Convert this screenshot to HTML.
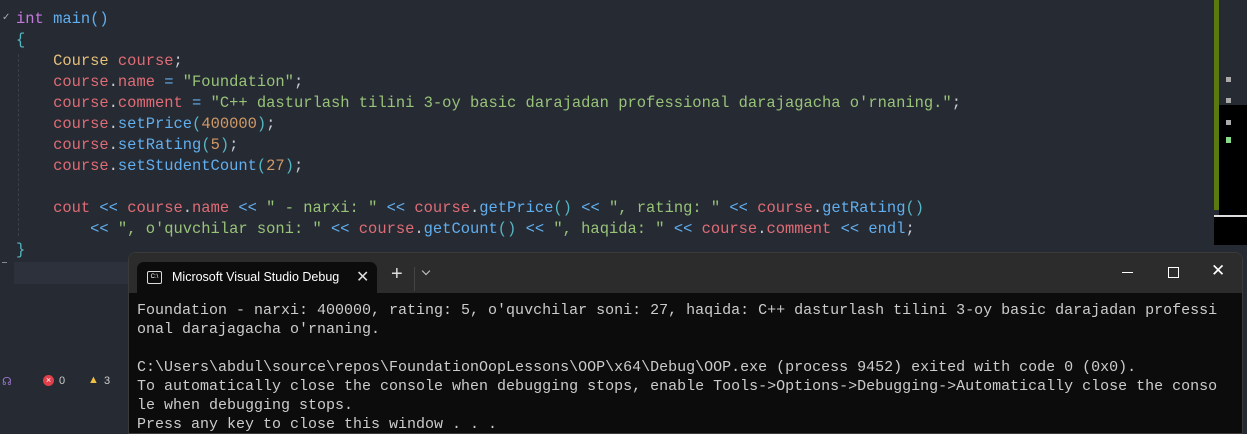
<!DOCTYPE html>
<html><head><style>
body{margin:0;width:1247px;height:424px;overflow:hidden;background:#262a33;position:relative;font-family:"Liberation Mono",monospace}
.code{position:absolute;left:16px;top:9px;font-size:15.45px;line-height:21px;color:#c8ccd4;white-space:pre}
.k{color:#c678dd}.f{color:#61afef}.t{color:#e5c07b}.v{color:#e06c75}.s{color:#98c379}.n{color:#d19a66}.p{color:#56b6c2}.o{color:#61afef}
.guide{position:absolute;left:18px;top:54px;height:182px;border-left:1px dashed #3a3f4a}
.cur{position:absolute;left:14px;top:262px;width:1200px;height:22px;background:#2d313b}
.status{position:absolute;left:0;top:372px;width:128px;height:20px;background:#262a33;font-family:"Liberation Sans",sans-serif;font-size:11px;color:#ccc}
.mini{position:absolute;left:1214px;top:0;width:33px;height:245px;background:#262a33}
.win{position:absolute;left:128px;top:252px;width:1113px;height:180px;background:#0c0c0c;border:1px solid #3a3a3a;border-radius:8px 8px 0 0;overflow:hidden}
.bar{position:absolute;left:0;top:0;width:100%;height:40px;background:#2c2c2c}
.tab{position:absolute;left:8px;top:9px;width:240px;height:32px;background:#0c0c0c;border-radius:7px 7px 0 0;font-family:"Liberation Sans",sans-serif;font-size:12.5px;color:#fff}
.con{position:absolute;left:8px;top:48px;font-size:15px;line-height:19px;color:#cccccc;white-space:pre}
</style></head><body>
<div class="cur"></div>
<div class="guide"></div>
<div style="position:absolute;left:2px;top:12px;color:#aaa;font-size:10px">✓</div>
<div style="position:absolute;left:2px;top:262px;width:5px;border-top:1px solid #888"></div>
<div class="code"><span class="k">int</span> <span class="f">main</span><span class="o">()</span>
<span class="p">{</span>
    <span class="t">Course</span> <span class="v">course</span>;
    <span class="v">course</span>.<span class="v">name</span> <span class="o">=</span> <span class="s">"Foundation"</span>;
    <span class="v">course</span>.<span class="v">comment</span> <span class="o">=</span> <span class="s">"C++ dasturlash tilini 3-oy basic darajadan professional darajagacha o'rnaning."</span>;
    <span class="v">course</span>.<span class="f">setPrice</span><span class="p">(</span><span class="n">400000</span><span class="p">)</span>;
    <span class="v">course</span>.<span class="f">setRating</span><span class="p">(</span><span class="n">5</span><span class="p">)</span>;
    <span class="v">course</span>.<span class="f">setStudentCount</span><span class="p">(</span><span class="n">27</span><span class="p">)</span>;

    <span class="v">cout</span> <span class="o">&lt;&lt;</span> <span class="v">course</span>.<span class="v">name</span> <span class="o">&lt;&lt;</span> <span class="s">" - narxi: "</span> <span class="o">&lt;&lt;</span> <span class="v">course</span>.<span class="f">getPrice</span><span class="p">()</span> <span class="o">&lt;&lt;</span> <span class="s">", rating: "</span> <span class="o">&lt;&lt;</span> <span class="v">course</span>.<span class="f">getRating</span><span class="p">()</span>
        <span class="o">&lt;&lt;</span> <span class="s">", o'quvchilar soni: "</span> <span class="o">&lt;&lt;</span> <span class="v">course</span>.<span class="f">getCount</span><span class="p">()</span> <span class="o">&lt;&lt;</span> <span class="s">", haqida: "</span> <span class="o">&lt;&lt;</span> <span class="v">course</span>.<span class="v">comment</span> <span class="o">&lt;&lt;</span> <span class="f">endl</span>;
<span class="p">}</span></div>
<div class="mini">
<div style="position:absolute;left:0;top:0;width:5px;height:210px;background:#5a7a10"></div>
<div style="position:absolute;left:5px;top:105px;width:28px;height:110px;background:#000"></div>
<div style="position:absolute;left:0;top:215px;width:33px;height:2px;background:#ddd"></div>
<div style="position:absolute;left:0;top:217px;width:33px;height:28px;background:#000"></div>
<div style="position:absolute;left:12px;top:77px;width:5px;height:5px;background:#aaa"></div>
<div style="position:absolute;left:12px;top:98px;width:5px;height:5px;background:#aaa"></div>
<div style="position:absolute;left:12px;top:120px;width:5px;height:5px;background:#aaa"></div>
<div style="position:absolute;left:12px;top:137px;width:5px;height:6px;background:#8d8"></div>
</div>
<div class="status"><span style="position:absolute;left:2px;top:3px;color:#a07ad0">☊</span>
<span style="position:absolute;left:43px;top:3px;width:11px;height:11px;border-radius:50%;background:#e0404a;color:#fff;font-size:9px;line-height:11px;text-align:center">×</span><span style="position:absolute;left:59px;top:3px">0</span>
<span style="position:absolute;left:88px;top:2px;color:#f0c040">▲</span><span style="position:absolute;left:104px;top:3px">3</span></div>
<div class="win">
<div class="bar"></div>
<div class="tab">
<div style="position:absolute;left:10px;top:9px;width:13px;height:11px;border:1.5px solid #ddd;border-radius:2px;font-size:6px;line-height:11px;text-align:center">C:\</div>
<div style="position:absolute;left:35px;top:8px;width:170px;overflow:hidden;white-space:nowrap">Microsoft Visual Studio Debug Console</div>
<div style="position:absolute;left:219px;top:5px;font-size:16px;color:#ddd">✕</div>
</div>
<div style="position:absolute;left:262px;top:10px;color:#ddd;font-size:20px;font-family:'Liberation Sans'">+</div>
<div style="position:absolute;left:285px;top:14px;width:1px;height:24px;background:#444"></div>
<div style="position:absolute;left:294px;top:15px;width:5px;height:5px;border-right:1.5px solid #ccc;border-bottom:1.5px solid #ccc;transform:rotate(45deg)"></div>
<div style="position:absolute;left:993px;top:19px;width:11px;height:1px;background:#fff"></div>
<div style="position:absolute;left:1039px;top:14px;width:9px;height:9px;border:1px solid #fff"></div>
<div style="position:absolute;left:1082px;top:8px;color:#fff;font-size:17px">✕</div>
<div class="con">Foundation - narxi: 400000, rating: 5, o'quvchilar soni: 27, haqida: C++ dasturlash tilini 3-oy basic darajadan professi
onal darajagacha o'rnaning.

C:\Users\abdul\source\repos\FoundationOopLessons\OOP\x64\Debug\OOP.exe (process 9452) exited with code 0 (0x0).
To automatically close the console when debugging stops, enable Tools-&gt;Options-&gt;Debugging-&gt;Automatically close the conso
le when debugging stops.
Press any key to close this window . . .</div>
</div>
</body></html>
